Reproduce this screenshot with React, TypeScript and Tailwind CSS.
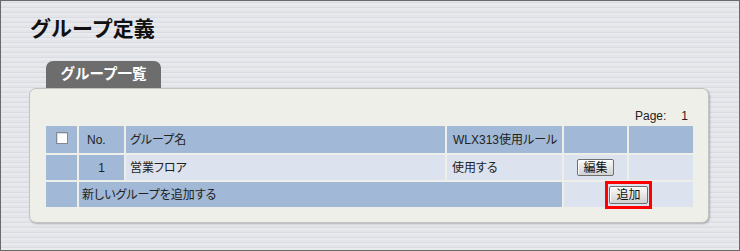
const CJK = "font-['Liberation_Sans','Noto_Sans_CJK_JP',sans-serif]";

function Cell({ className = "", children }: { className?: string; children?: React.ReactNode }) {
  return <div className={`flex items-center text-[12px] text-[#222] ${className}`}>{children}</div>;
}

function Btn({ label, w, h }: { label: string; w: string; h: string }) {
  return (
    <span
      className={`flex items-center justify-center ${w} ${h} border border-[#6f6f6f] rounded-[2px] bg-gradient-to-b from-[#fbfbfb] to-[#d2d2d2] text-[12px] leading-none text-[#111] shadow-[inset_1px_1px_0_#ffffff]`}
    >
      {label}
    </span>
  );
}

export default function App() {
  return (
    <div
      className={`${CJK} w-[740px] h-[251px] border border-[#6a6a6a] pl-[28px] pt-[13px] bg-[#e4e6ea] bg-[repeating-linear-gradient(0deg,#e8eaee_0px,#e8eaee_2px,#d9dce2_2px,#d9dce2_3px,#e3e5e9_3px,#e3e5e9_5px)]`}
    >
      <h1 className="ml-[1px] h-[30px] leading-[30px] text-[21px] font-bold text-[#111]">グループ定義</h1>

      <div className="mt-[17px] ml-[17px] flex h-[27px] w-[115px] items-center justify-center rounded-t-[7px] bg-[#6d6d6d] text-[14.5px] font-bold text-white">
        グループ一覧
      </div>

      <div className="h-[135px] w-[680px] rounded-[7px] border border-[#c2c2c2] bg-[#efefe9] pl-[16px] pt-[19px] shadow-[1px_1px_2px_rgba(0,0,0,0.25)]">
        <div className="flex h-[16px] w-[647px] items-center justify-end gap-[15px] pr-[5px] text-[12px] leading-[16px] text-[#222]">
          <span>Page:</span>
          <span>1</span>
        </div>

        <div className="mt-[2px] grid w-[647px] grid-cols-[31px_45px_319px_115px_63px_64px] grid-rows-[27px_25px_25px] gap-[2px]">
          <Cell className="justify-center bg-[#a1b8d6]">
            <span className="-mt-[4px] block h-[12px] w-[12px] border border-[#7f8a99] bg-white shadow-[inset_1px_1px_1px_rgba(0,0,0,0.15)]" />
          </Cell>
          <Cell className="bg-[#a1b8d6] pl-[8px]">No.</Cell>
          <Cell className="bg-[#a1b8d6] pl-[4px] [font-feature-settings:'palt']">グループ名</Cell>
          <Cell className="bg-[#a1b8d6] pl-[6px] [font-feature-settings:'palt']">WLX313使用ルール</Cell>
          <Cell className="bg-[#a1b8d6]" />
          <Cell className="bg-[#a1b8d6]" />

          <Cell className="bg-[#a1b8d6]" />
          <Cell className="justify-center bg-[#a1b8d6]">1</Cell>
          <Cell className="bg-[#dde3ee] pl-[4px] [font-feature-settings:'palt']">営業フロア</Cell>
          <Cell className="bg-[#dde3ee] pl-[5px] [font-feature-settings:'palt']">使用する</Cell>
          <Cell className="justify-center bg-[#dde3ee]">
            <Btn label="編集" w="w-[37px]" h="h-[17px]" />
          </Cell>
          <Cell className="bg-[#dde3ee]" />

          <Cell className="bg-[#a1b8d6]" />
          <Cell className="col-span-3 bg-[#a1b8d6] pl-[3px] [font-feature-settings:'palt']">新しいグループを追加する</Cell>
          <Cell className="col-span-2 justify-center bg-[#dde3ee]">
            <span className="relative">
              <Btn label="追加" w="w-[39px]" h="h-[18px]" />
              <span className="pointer-events-none absolute -inset-x-[4px] -inset-y-[5px] border-[3px] border-[#ff0000]" />
            </span>
          </Cell>
        </div>
      </div>
    </div>
  );
}
